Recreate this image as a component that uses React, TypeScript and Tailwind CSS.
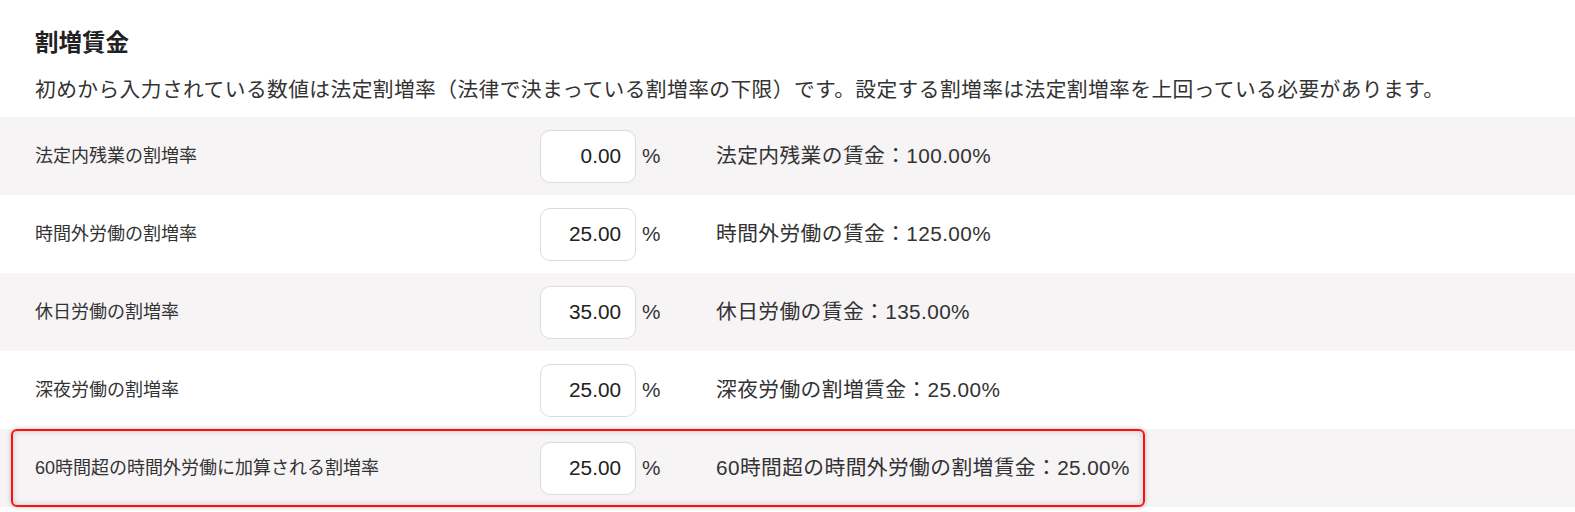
import React from 'react';

type Rate = {
  label: string;
  value: string;
  result: string;
  highlight?: boolean;
};

const rates: Rate[] = [
  { label: '法定内残業の割増率', value: '0.00', result: '法定内残業の賃金：100.00%' },
  { label: '時間外労働の割増率', value: '25.00', result: '時間外労働の賃金：125.00%' },
  { label: '休日労働の割増率', value: '35.00', result: '休日労働の賃金：135.00%' },
  { label: '深夜労働の割増率', value: '25.00', result: '深夜労働の割増賃金：25.00%' },
  {
    label: '60時間超の時間外労働に加算される割増率',
    value: '25.00',
    result: '60時間超の時間外労働の割増賃金：25.00%',
    highlight: true,
  },
];

const font = { fontFamily: '"Liberation Sans", "Noto Sans CJK JP", sans-serif' };

const RateRow: React.FC<{ rate: Rate; index: number }> = ({ rate, index }) => (
  <div
    className={`relative flex h-[78px] items-center pl-[35px] ${
      index % 2 === 0 ? 'bg-[#f6f4f5]' : 'bg-white'
    }`}
  >
    <div className="w-[505px] text-[18px] text-[#333]">{rate.label}</div>
    <input
      readOnly
      value={rate.value}
      className="h-[53px] w-[96px] rounded-[10px] border border-[#dcdcdc] bg-white pr-[14px] text-right text-[20.75px] text-[#222] outline-none"
      style={font}
    />
    <div className="w-[80px] pl-[6px] text-[20.75px] text-[#333]">%</div>
    <div className="text-[20.75px] tracking-[0.4px] text-[#333]">{rate.result}</div>
    {/* 注目枠 */}
    {rate.highlight && (
      <div className="pointer-events-none absolute top-0 bottom-0 left-[11px] w-[1134px] rounded-[6px] border-2 border-[#ff1010] shadow-[0_0_5px_rgba(0,0,0,0.25),inset_0_0_6px_rgba(0,0,0,0.18)]" />
    )}
  </div>
);

const App: React.FC = () => {
  return (
    <div className="h-[512px] w-full overflow-hidden bg-white pt-[28px]" style={font}>
      <h2 className="pl-[35px] text-[23.5px] leading-[30px] font-bold text-[#222]">割増賃金</h2>
      <p className="mt-[17px] mb-[12px] pl-[35px] text-[20.75px] leading-[30px] tracking-[0.4px] text-[#333]">
        初めから入力されている数値は法定割増率（法律で決まっている割増率の下限）です。設定する割増率は法定割増率を上回っている必要があります。
      </p>
      <div className="flex flex-col">
        {rates.map((rate, i) => (
          <RateRow key={rate.label} rate={rate} index={i} />
        ))}
      </div>
    </div>
  );
};

export default App;
